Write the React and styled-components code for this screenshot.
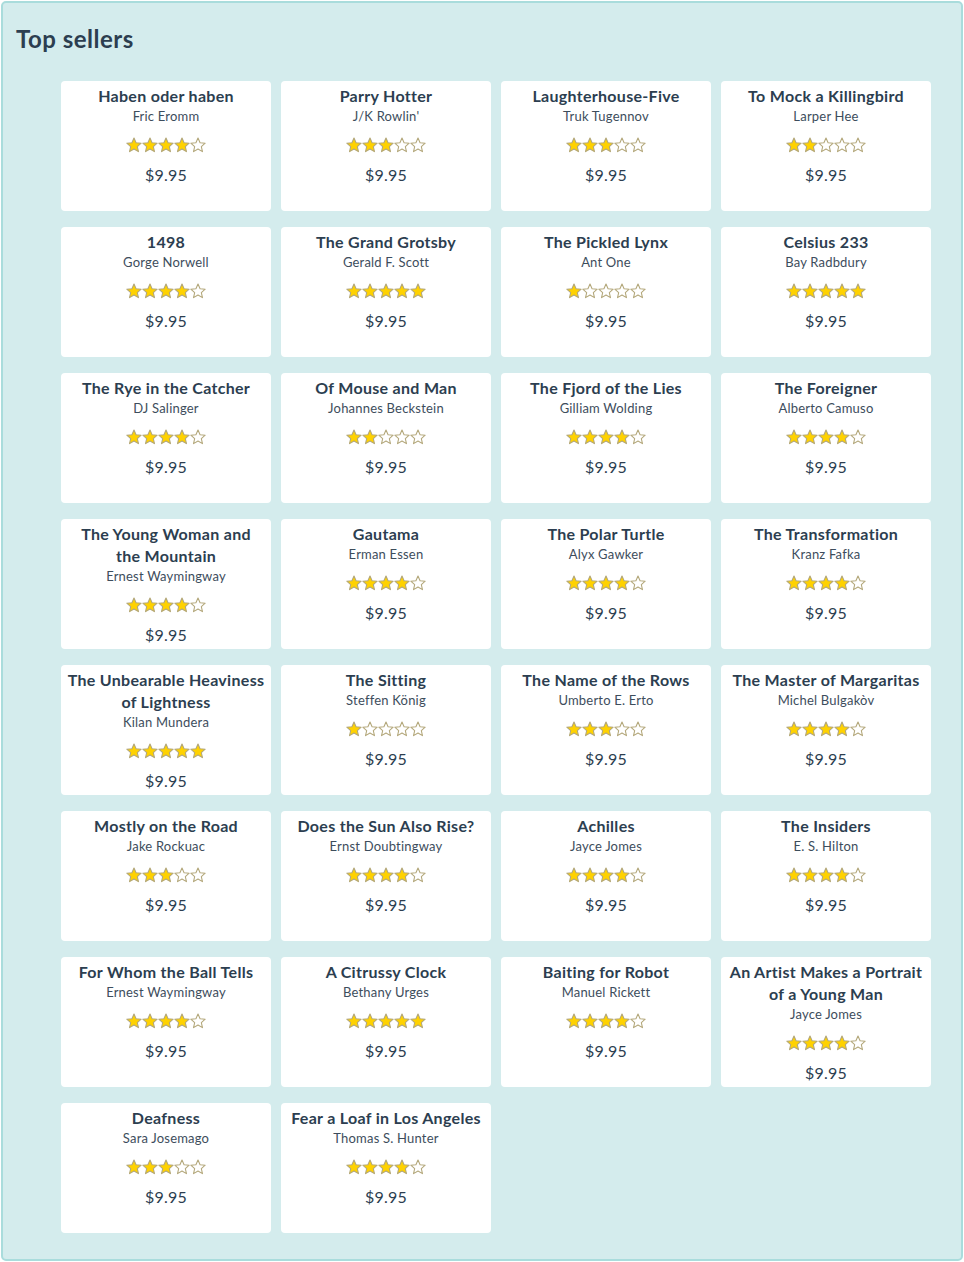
import React from "react";
import styled, { createGlobalStyle } from "styled-components";

const GlobalStyle = createGlobalStyle`
  body {
    margin: 0;
    font-family: Lato, "Noto Sans", sans-serif;
    color: #2c3e50;
    background: #fff;
  }
`;

const Panel = styled.section`
  margin: 1px;
  min-height: 1256px;
  box-sizing: border-box;
  background: #d4eced;
  border: 2px solid #a9dcdc;
  border-radius: 5px;
  padding: 19px 30px 26px 13px;
`;

const Title = styled.h1`
  margin: 0;
  font-size: 24px;
  line-height: 34px;
  font-weight: 700;
  letter-spacing: 0.5px;
  color: #2c3e50;
`;

const Grid = styled.ul`
  list-style: none;
  margin: 25px 0 0;
  padding: 0 0 0 45px;
  display: grid;
  grid-template-columns: repeat(4, 210px);
  column-gap: 10px;
  row-gap: 16px;
`;

const Card = styled.li`
  background: #fff;
  border-radius: 4px;
  height: 130px;
  box-sizing: border-box;
  padding: 4px 4px 0;
  display: flex;
  flex-direction: column;
  align-items: center;
  text-align: center;
`;

const BookTitle = styled.div`
  font-size: 16px;
  line-height: 22px;
  font-weight: 700;
  letter-spacing: 0.3px;
  color: #2c3e50;
`;

const Author = styled.div`
  font-size: 13px;
  line-height: 18px;
  letter-spacing: 0.2px;
  color: #3d4d5c;
`;

const Stars = styled.div`
  display: flex;
  margin-top: 12px;
  height: 16px;
`;

const Price = styled.div`
  margin-top: 11px;
  font-size: 16px;
  line-height: 22px;
  letter-spacing: 0.2px;
  color: #2c3e50;
`;

const Star = ({ filled }) => (
  <svg width="16" height="16" viewBox="0 0 24 24">
    <polygon
      points="12,1.5 15.1,8.6 22.8,9.3 17,14.4 18.7,22 12,18 5.3,22 7,14.4 1.2,9.3 8.9,8.6"
      fill={filled ? "#ffd200" : "#ffffff"}
      stroke="#b3a77a"
      strokeWidth="1.6"
      strokeLinejoin="round"
    />
  </svg>
);

const books = [
  ["Haben oder haben", "Fric Eromm", 4],
  ["Parry Hotter", "J/K Rowlin'", 3],
  ["Laughterhouse-Five", "Truk Tugennov", 3],
  ["To Mock a Killingbird", "Larper Hee", 2],
  ["1498", "Gorge Norwell", 4],
  ["The Grand Grotsby", "Gerald F. Scott", 5],
  ["The Pickled Lynx", "Ant One", 1],
  ["Celsius 233", "Bay Radbdury", 5],
  ["The Rye in the Catcher", "DJ Salinger", 4],
  ["Of Mouse and Man", "Johannes Beckstein", 2],
  ["The Fjord of the Lies", "Gilliam Wolding", 4],
  ["The Foreigner", "Alberto Camuso", 4],
  ["The Young Woman and the\u00a0Mountain", "Ernest Waymingway", 4],
  ["Gautama", "Erman Essen", 4],
  ["The Polar Turtle", "Alyx Gawker", 4],
  ["The Transformation", "Kranz Fafka", 4],
  ["The Unbearable Heaviness of Lightness", "Kilan Mundera", 5],
  ["The Sitting", "Steffen König", 1],
  ["The Name of the Rows", "Umberto E. Erto", 3],
  ["The Master of Margaritas", "Michel Bulgakòv", 4],
  ["Mostly on the Road", "Jake Rockuac", 3],
  ["Does the Sun Also Rise?", "Ernst Doubtingway", 4],
  ["Achilles", "Jayce Jomes", 4],
  ["The Insiders", "E. S. Hilton", 4],
  ["For Whom the Ball Tells", "Ernest Waymingway", 4],
  ["A Citrussy Clock", "Bethany Urges", 5],
  ["Baiting for Robot", "Manuel Rickett", 4],
  ["An Artist Makes a Portrait of a Young Man", "Jayce Jomes", 4],
  ["Deafness", "Sara Josemago", 3],
  ["Fear a Loaf in Los Angeles", "Thomas S. Hunter", 4],
];

export default function App() {
  return (
    <>
      <GlobalStyle />
      <Panel>
        <Title>Top sellers</Title>
        <Grid>
          {books.map(([title, author, rating]) => (
            <Card key={title}>
              <BookTitle>{title}</BookTitle>
              <Author>{author}</Author>
              <Stars>
                {[1, 2, 3, 4, 5].map((n) => (
                  <Star key={n} filled={n <= rating} />
                ))}
              </Stars>
              <Price>$9.95</Price>
            </Card>
          ))}
        </Grid>
      </Panel>
    </>
  );
}
